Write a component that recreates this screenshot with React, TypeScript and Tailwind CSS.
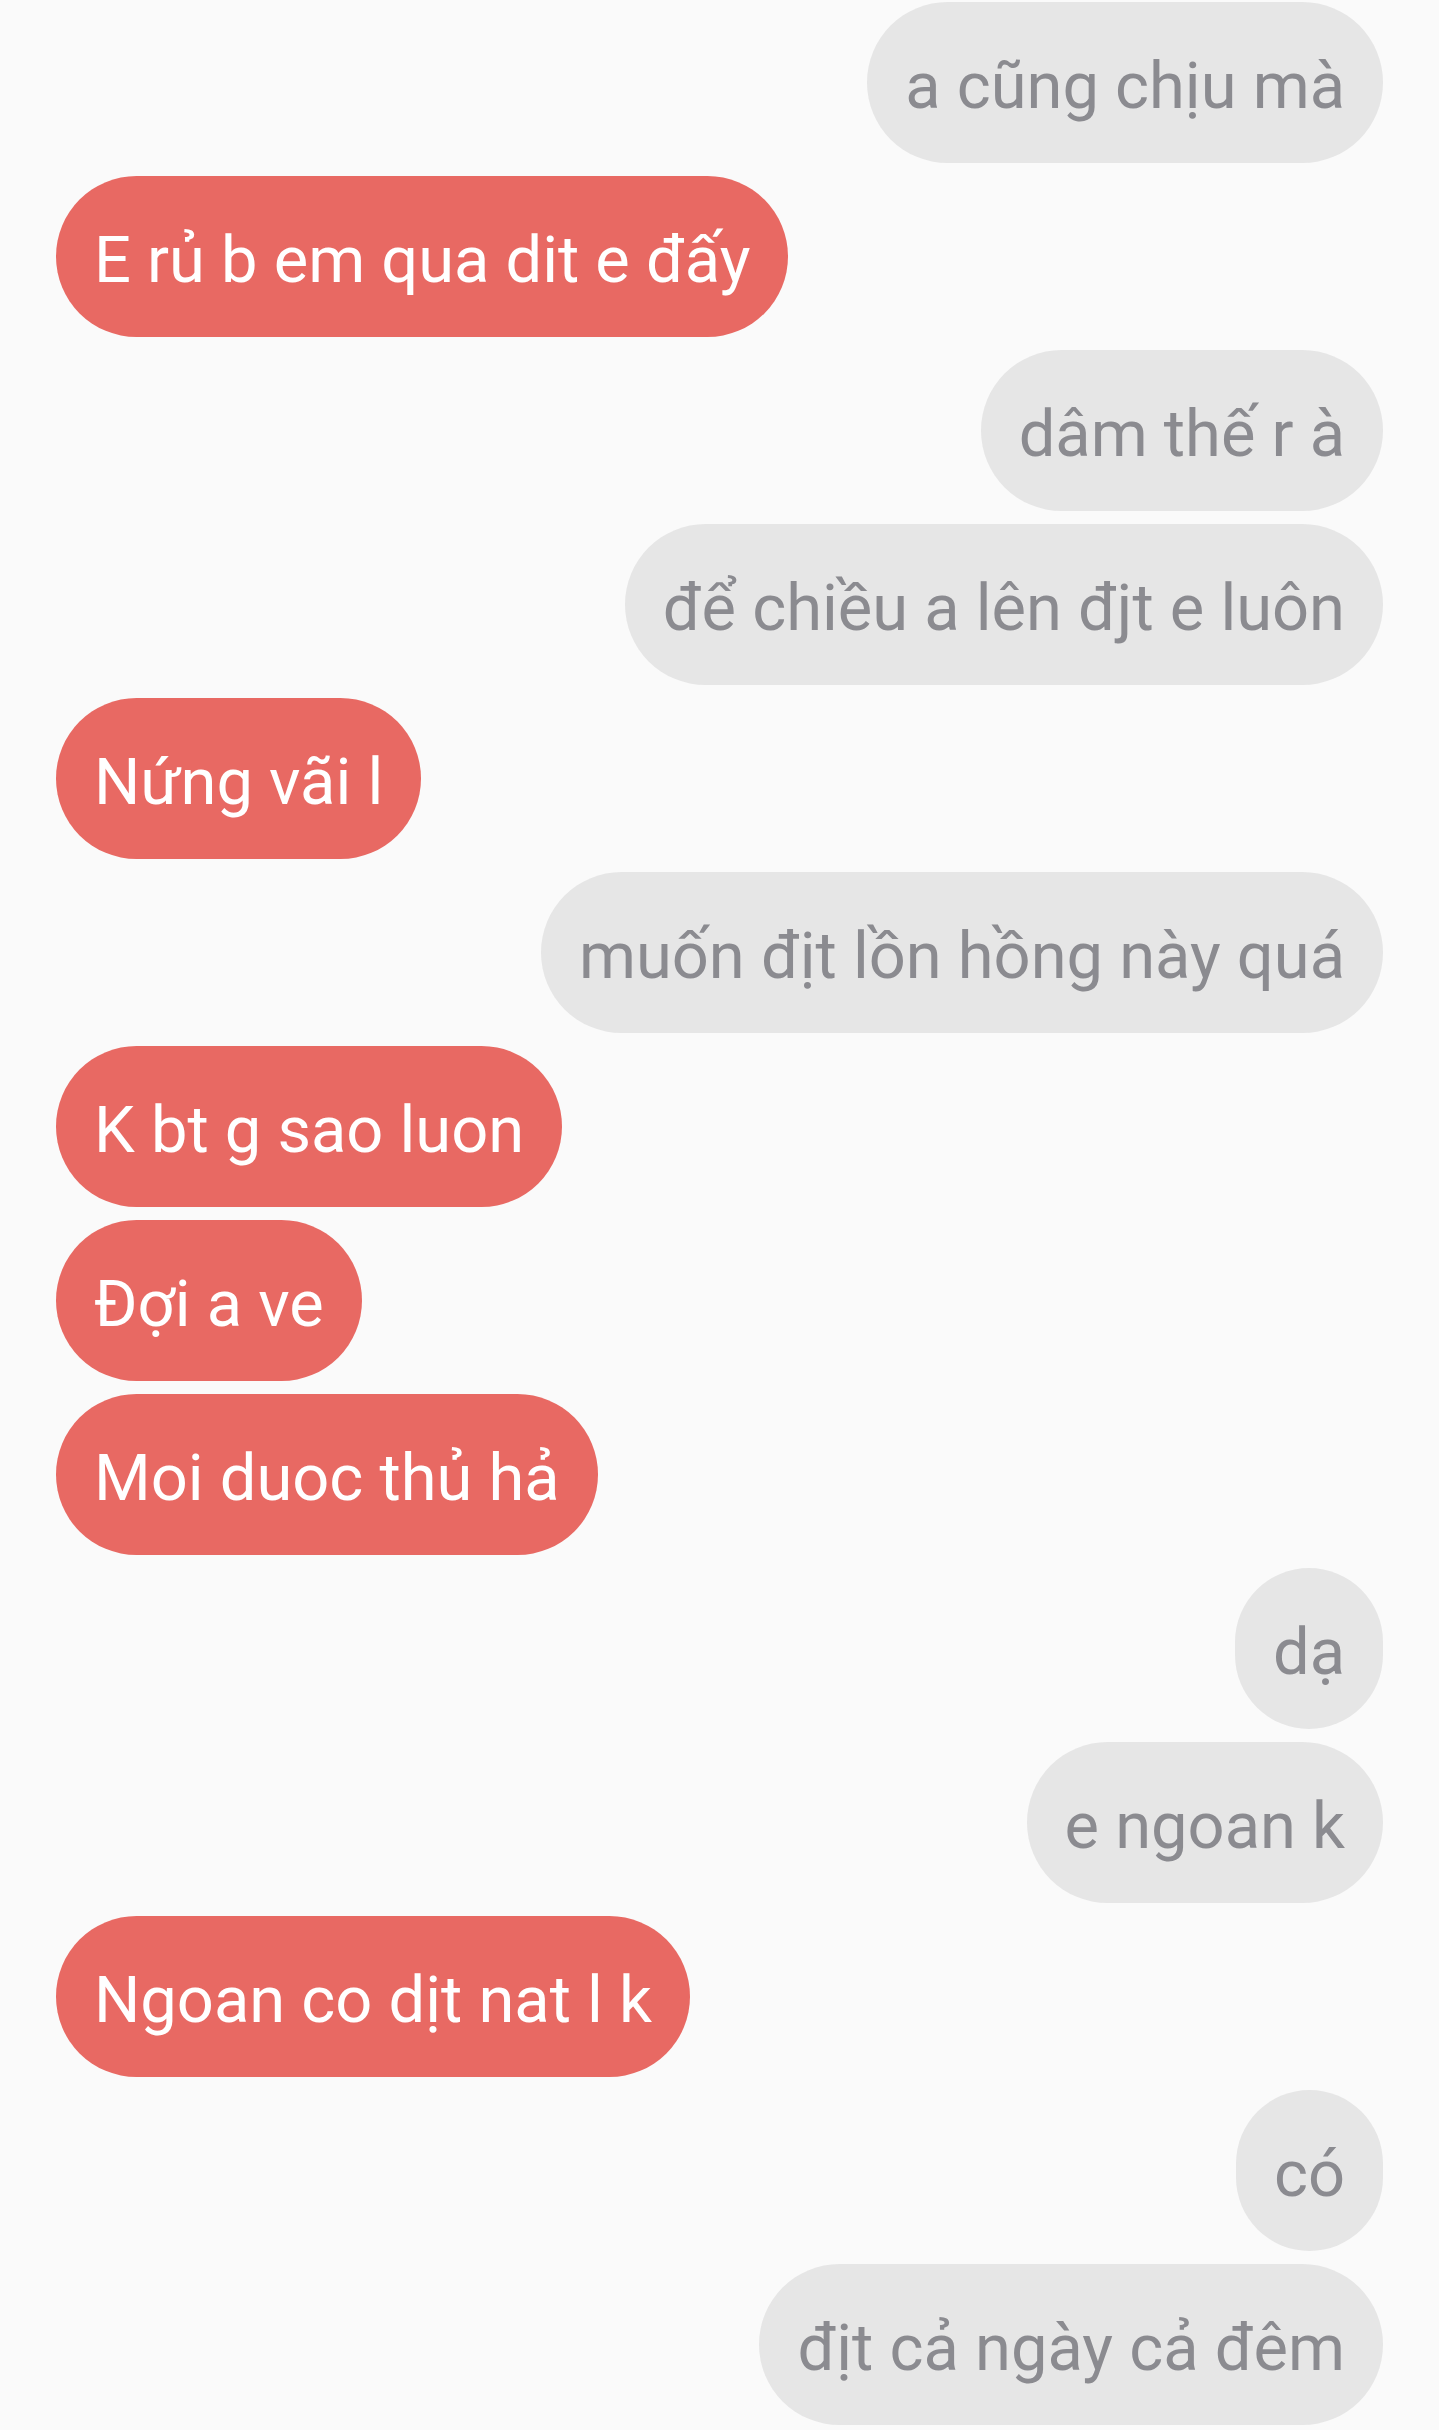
type Message = { id: number; text: string; mine: boolean };

// mine = gray bubble on the right, otherwise red bubble on the left
const MESSAGES: Message[] = [
  { id: 1, text: 'a cũng chịu mà', mine: true },
  { id: 2, text: 'E rủ b em qua dit e đấy', mine: false },
  { id: 3, text: 'dâm thế r à', mine: true },
  { id: 4, text: 'để chiều a lên đjt e luôn', mine: true },
  { id: 5, text: 'Nứng vãi l', mine: false },
  { id: 6, text: 'muốn địt lồn hồng này quá', mine: true },
  { id: 7, text: 'K bt g sao luon', mine: false },
  { id: 8, text: 'Đợi a ve', mine: false },
  { id: 9, text: 'Moi duoc thủ hả', mine: false },
  { id: 10, text: 'dạ', mine: true },
  { id: 11, text: 'e ngoan k', mine: true },
  { id: 12, text: 'Ngoan co dịt nat l k', mine: false },
  { id: 13, text: 'có', mine: true },
  { id: 14, text: 'địt cả ngày cả đêm', mine: true },
];

function Bubble({ msg }: { msg: Message }) {
  return (
    <div className={msg.mine ? 'flex justify-end' : 'flex justify-start'}>
      <div
        className={
          msg.mine
            ? 'h-[161px] rounded-full bg-[#e6e6e6] text-[#8b8b90] px-[38px] pt-[8px] flex items-center whitespace-nowrap'
            : 'h-[161px] rounded-full bg-[#e86963] text-white px-[38px] pt-[8px] flex items-center whitespace-nowrap'
        }
      >
        <span className="text-[65px] leading-none">{msg.text}</span>
      </div>
    </div>
  );
}

export default function App() {
  return (
    <div
      className="min-h-[2430px] bg-[#fafafa] px-[56px] pt-[2px] flex flex-col gap-[13px]"
      style={{ fontFamily: 'Roboto, "Noto Sans", sans-serif' }}
    >
      {MESSAGES.map((msg) => (
        <Bubble key={msg.id} msg={msg} />
      ))}
    </div>
  );
}
